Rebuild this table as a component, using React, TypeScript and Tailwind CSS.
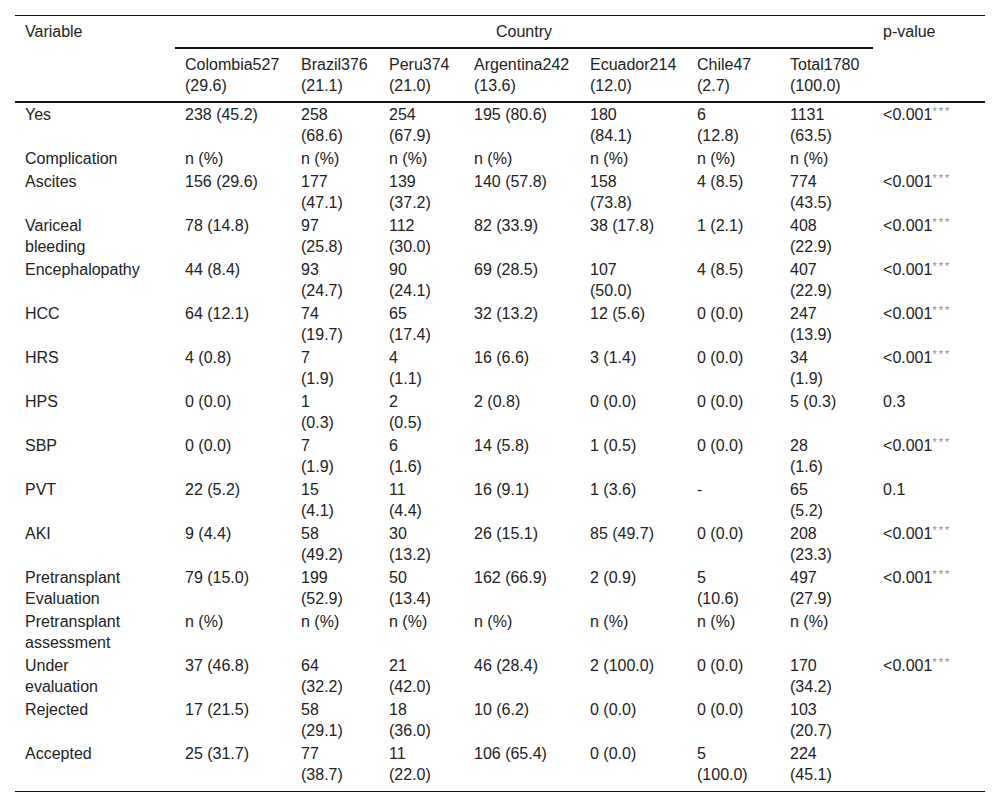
const P = '<0.001';

const columns = [
  'Colombia527\n(29.6)',
  'Brazil376\n(21.1)',
  'Peru374\n(21.0)',
  'Argentina242\n(13.6)',
  'Ecuador214\n(12.0)',
  'Chile47\n(2.7)',
  'Total1780\n(100.0)',
];

const nPct = ['n (%)', 'n (%)', 'n (%)', 'n (%)', 'n (%)', 'n (%)', 'n (%)'];

const rows: { label: string; values: string[]; p: string }[] = [
  { label: 'Yes', values: ['238 (45.2)', '258\n(68.6)', '254\n(67.9)', '195 (80.6)', '180\n(84.1)', '6\n(12.8)', '1131\n(63.5)'], p: P },
  { label: 'Complication', values: nPct, p: '' },
  { label: 'Ascites', values: ['156 (29.6)', '177\n(47.1)', '139\n(37.2)', '140 (57.8)', '158\n(73.8)', '4 (8.5)', '774\n(43.5)'], p: P },
  { label: 'Variceal\nbleeding', values: ['78 (14.8)', '97\n(25.8)', '112\n(30.0)', '82 (33.9)', '38 (17.8)', '1 (2.1)', '408\n(22.9)'], p: P },
  { label: 'Encephalopathy', values: ['44 (8.4)', '93\n(24.7)', '90\n(24.1)', '69 (28.5)', '107\n(50.0)', '4 (8.5)', '407\n(22.9)'], p: P },
  { label: 'HCC', values: ['64 (12.1)', '74\n(19.7)', '65\n(17.4)', '32 (13.2)', '12 (5.6)', '0 (0.0)', '247\n(13.9)'], p: P },
  { label: 'HRS', values: ['4 (0.8)', '7\n(1.9)', '4\n(1.1)', '16 (6.6)', '3 (1.4)', '0 (0.0)', '34\n(1.9)'], p: P },
  { label: 'HPS', values: ['0 (0.0)', '1\n(0.3)', '2\n(0.5)', '2 (0.8)', '0 (0.0)', '0 (0.0)', '5 (0.3)'], p: '0.3' },
  { label: 'SBP', values: ['0 (0.0)', '7\n(1.9)', '6\n(1.6)', '14 (5.8)', '1 (0.5)', '0 (0.0)', '28\n(1.6)'], p: P },
  { label: 'PVT', values: ['22 (5.2)', '15\n(4.1)', '11\n(4.4)', '16 (9.1)', '1 (3.6)', '-', '65\n(5.2)'], p: '0.1' },
  { label: 'AKI', values: ['9 (4.4)', '58\n(49.2)', '30\n(13.2)', '26 (15.1)', '85 (49.7)', '0 (0.0)', '208\n(23.3)'], p: P },
  { label: 'Pretransplant\nEvaluation', values: ['79 (15.0)', '199\n(52.9)', '50\n(13.4)', '162 (66.9)', '2 (0.9)', '5\n(10.6)', '497\n(27.9)'], p: P },
  { label: 'Pretransplant\nassessment', values: nPct, p: '' },
  { label: 'Under\nevaluation', values: ['37 (46.8)', '64\n(32.2)', '21\n(42.0)', '46 (28.4)', '2 (100.0)', '0 (0.0)', '170\n(34.2)'], p: P },
  { label: 'Rejected', values: ['17 (21.5)', '58\n(29.1)', '18\n(36.0)', '10 (6.2)', '0 (0.0)', '0 (0.0)', '103\n(20.7)'], p: '' },
  { label: 'Accepted', values: ['25 (31.7)', '77\n(38.7)', '11\n(22.0)', '106 (65.4)', '0 (0.0)', '5\n(100.0)', '224\n(45.1)'], p: '' },
];

function PValue({ value }: { value: string }) {
  if (value === P) {
    return (
      <>
        &lt;0.001<sup className="text-[11px] tracking-[2px] text-[#8a8a8a]">***</sup>
      </>
    );
  }
  return <>{value}</>;
}

export default function App() {
  return (
    <div className="min-h-screen bg-white px-[15px] pt-[15px] font-['Liberation_Sans',Arial,sans-serif] text-[16px] leading-[21px] text-[#222]">
      <table className="w-[970px] table-fixed border-separate border-spacing-0 text-left">
        <colgroup>
          <col className="w-[160px]" />
          <col className="w-[116px]" />
          <col className="w-[88px]" />
          <col className="w-[85px]" />
          <col className="w-[116px]" />
          <col className="w-[107px]" />
          <col className="w-[93px]" />
          <col className="w-[93px]" />
          <col className="w-[112px]" />
        </colgroup>
        <thead>
          <tr>
            <th
              rowSpan={2}
              className="border-t border-b-2 border-[#111] py-[5px] pl-[10px] align-top font-normal"
            >
              Variable
            </th>
            <th
              colSpan={7}
              className="border-t border-b-2 border-[#111] py-[5px] text-center font-normal"
            >
              Country
            </th>
            <th
              rowSpan={2}
              className="border-t border-b-2 border-[#111] py-[5px] pl-[10px] align-top font-normal"
            >
              p-value
            </th>
          </tr>
          <tr>
            {columns.map((c) => (
              <th
                key={c}
                className="whitespace-pre border-b-2 border-[#111] py-[5px] pl-[10px] align-top font-normal"
              >
                {c}
              </th>
            ))}
          </tr>
        </thead>
        <tbody>
          {rows.map((r, i) => {
            const last = i === rows.length - 1;
            const cell = last
              ? 'whitespace-pre border-b border-[#111] pt-px pb-[6px] pl-[10px] align-top'
              : 'whitespace-pre py-px pl-[10px] align-top';
            return (
              <tr key={r.label}>
                <td className={cell}>{r.label}</td>
                {r.values.map((v, j) => (
                  <td key={j} className={cell}>
                    {v}
                  </td>
                ))}
                <td className={cell}>
                  <PValue value={r.p} />
                </td>
              </tr>
            );
          })}
        </tbody>
      </table>
    </div>
  );
}
